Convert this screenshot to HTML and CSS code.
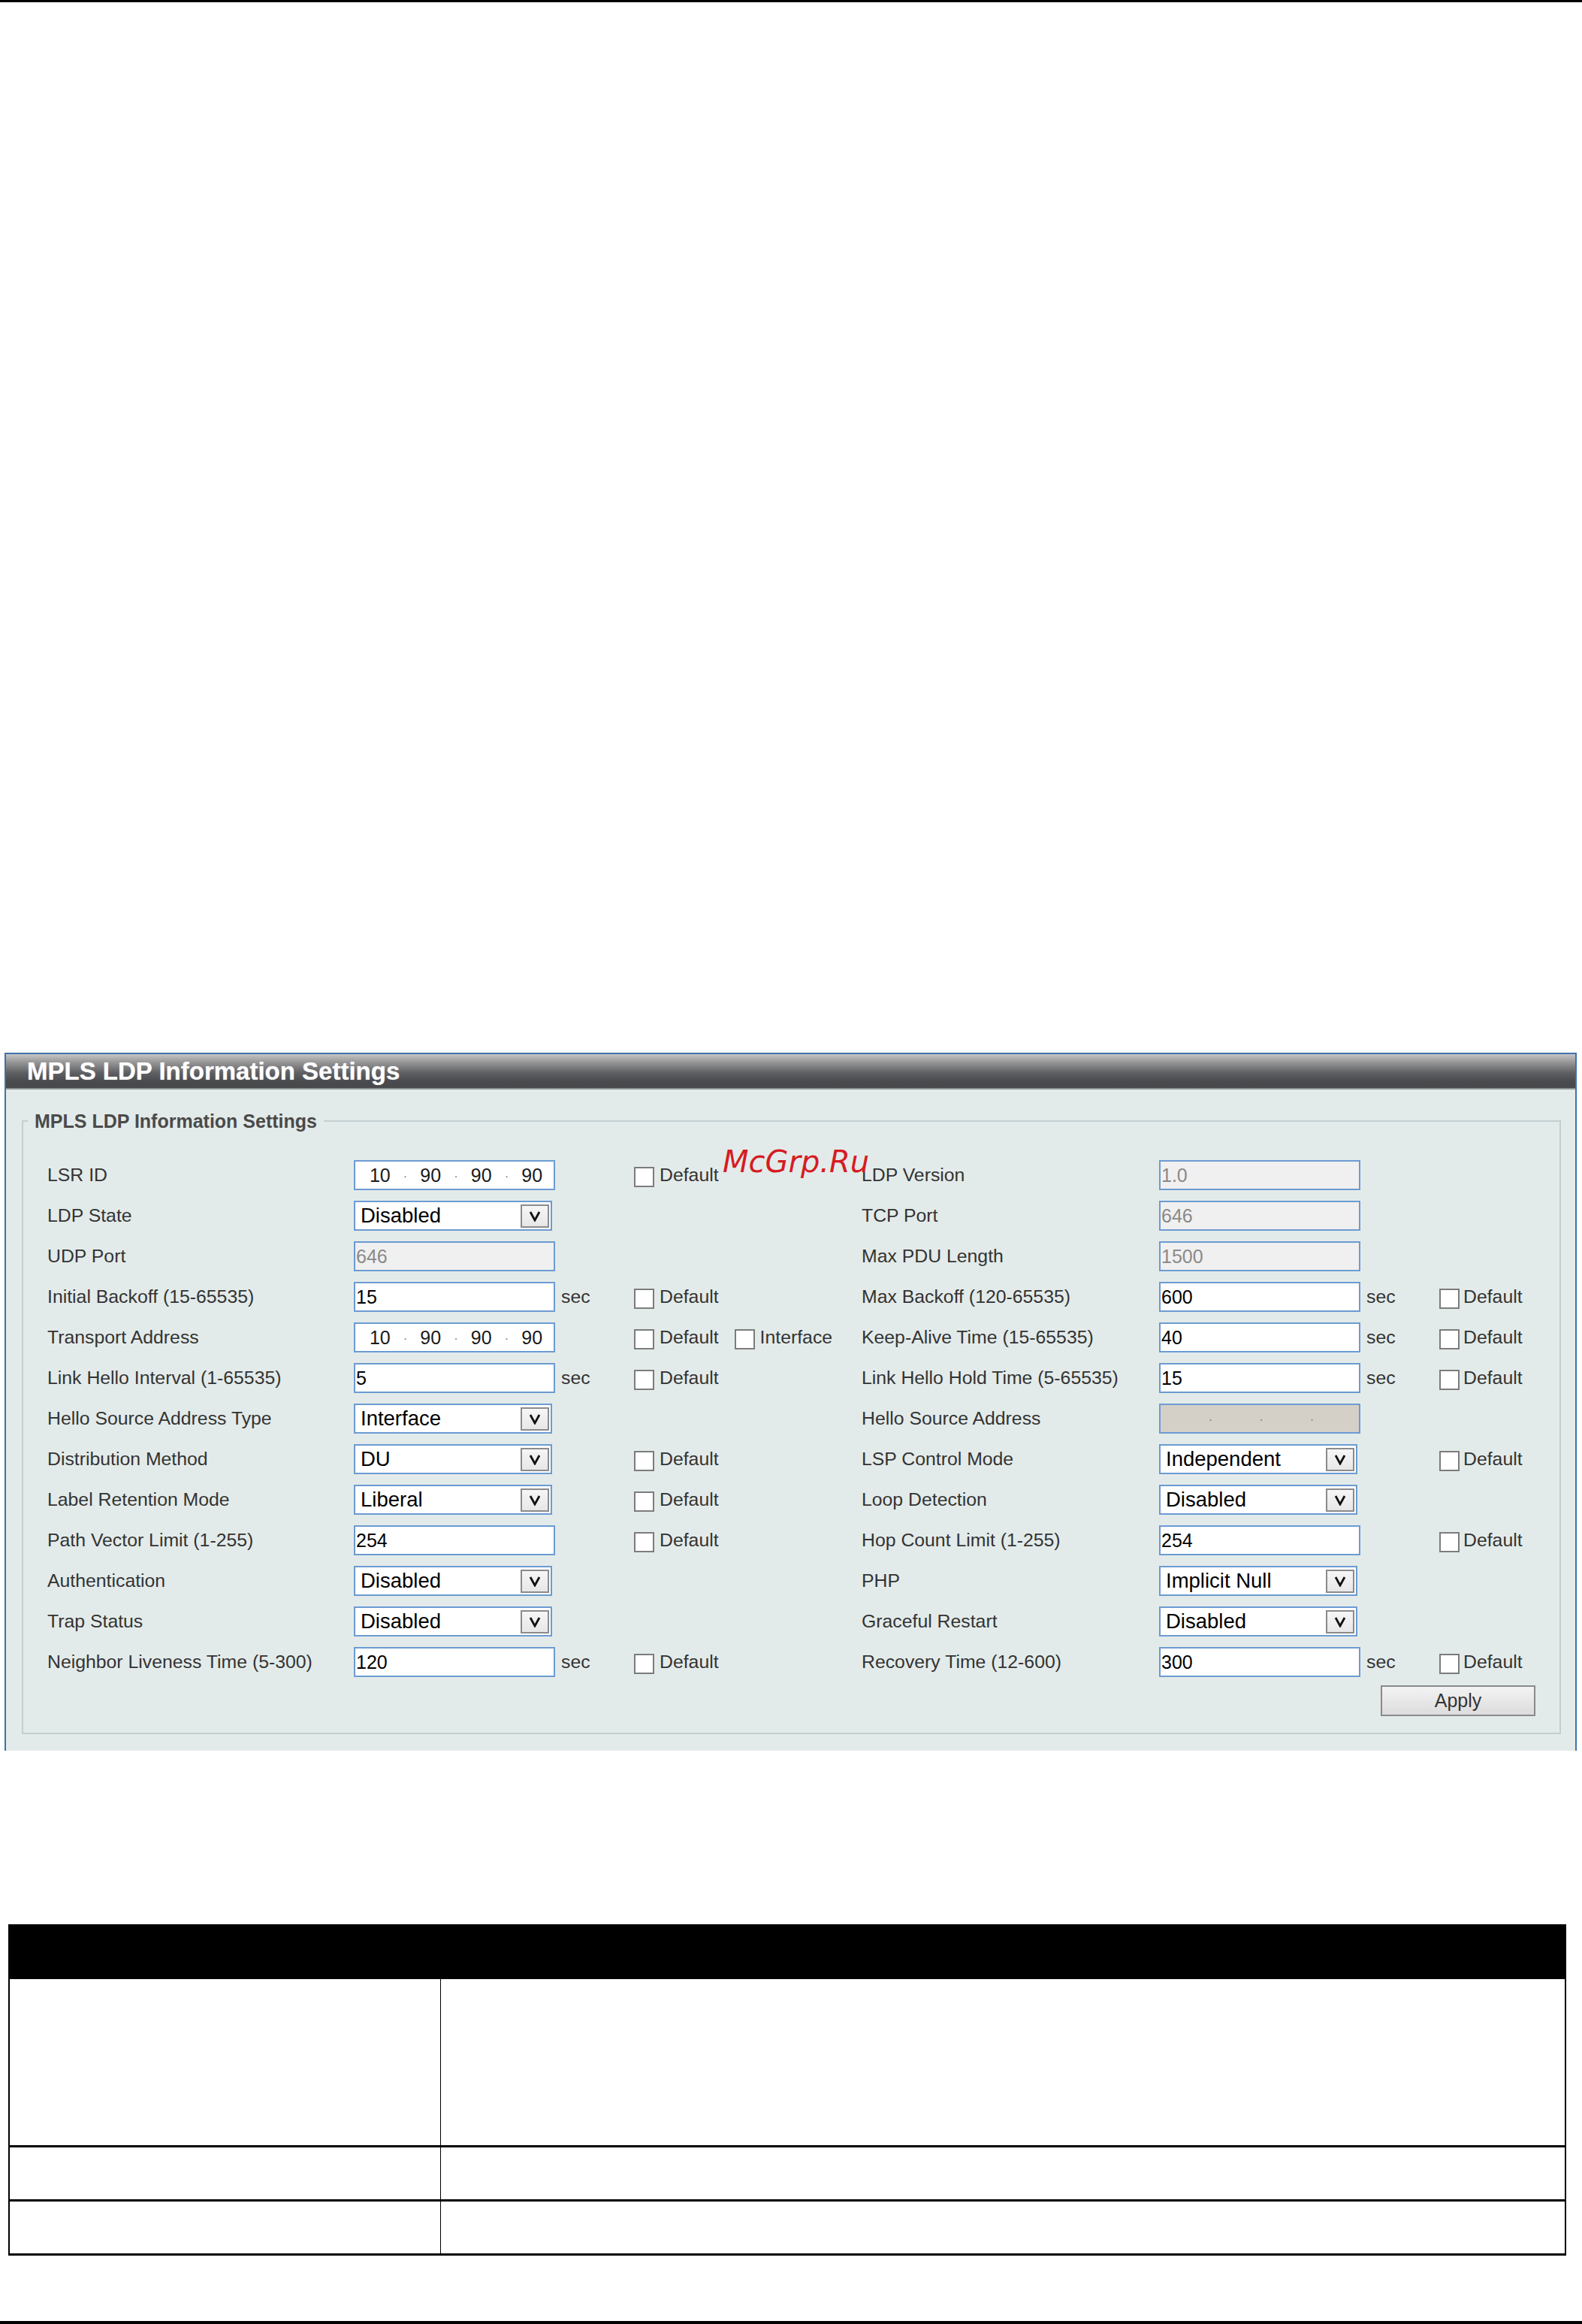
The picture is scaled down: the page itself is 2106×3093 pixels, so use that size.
FILE: index.html
```html
<!DOCTYPE html>
<html>
<head>
<meta charset="utf-8">
<title>MPLS LDP Information Settings</title>
<link rel="stylesheet" href="styles.css">
</head>
<body>
<div class="topline"></div>

<section class="panel">
  <div class="panel-title">MPLS LDP Information Settings</div>
  <div class="watermark">McGrp.Ru</div>
  <div class="panel-body">
    <fieldset class="fs">
      <legend class="fs-legend">MPLS LDP Information Settings</legend>
      <div class="grid">
        <div class="row">
          <span class="lbl">LSR ID</span>
          <div class="field ip"><span class="seg">10</span><span class="dot">.</span><span class="seg">90</span><span class="dot">.</span><span class="seg">90</span><span class="dot">.</span><span class="seg">90</span></div>
          <span></span>
          <div class="cb"><span class="box"></span><span class="cbt">Default</span></div>
          <span class="lbl">LDP Version</span>
          <div class="field dis">1.0</div>
          <span></span><span></span>
        </div>
        <div class="row">
          <span class="lbl">LDP State</span>
          <div class="field select"><span>Disabled</span><span class="arrow"><svg width="16" height="15" viewBox="0 0 16 15"><path d="M2 2 L8 13 L14 2" fill="none" stroke="#111" stroke-width="2.8"/></svg></span></div>
          <span></span><span></span>
          <span class="lbl">TCP Port</span>
          <div class="field dis">646</div>
          <span></span><span></span>
        </div>
        <div class="row">
          <span class="lbl">UDP Port</span>
          <div class="field dis">646</div>
          <span></span><span></span>
          <span class="lbl">Max PDU Length</span>
          <div class="field dis">1500</div>
          <span></span><span></span>
        </div>
        <div class="row">
          <span class="lbl">Initial Backoff (15-65535)</span>
          <div class="field">15</div>
          <span class="sec">sec</span>
          <div class="cb"><span class="box"></span><span class="cbt">Default</span></div>
          <span class="lbl">Max Backoff (120-65535)</span>
          <div class="field">600</div>
          <span class="sec">sec</span>
          <div class="cb cb-r"><span class="box"></span><span class="cbt">Default</span></div>
        </div>
        <div class="row">
          <span class="lbl">Transport Address</span>
          <div class="field ip"><span class="seg">10</span><span class="dot">.</span><span class="seg">90</span><span class="dot">.</span><span class="seg">90</span><span class="dot">.</span><span class="seg">90</span></div>
          <span></span>
          <div class="cb"><span class="box"></span><span class="cbt">Default</span><span class="box box-next"></span><span class="cbt">Interface</span></div>
          <span class="lbl">Keep-Alive Time (15-65535)</span>
          <div class="field">40</div>
          <span class="sec">sec</span>
          <div class="cb cb-r"><span class="box"></span><span class="cbt">Default</span></div>
        </div>
        <div class="row">
          <span class="lbl">Link Hello Interval (1-65535)</span>
          <div class="field">5</div>
          <span class="sec">sec</span>
          <div class="cb"><span class="box"></span><span class="cbt">Default</span></div>
          <span class="lbl">Link Hello Hold Time (5-65535)</span>
          <div class="field">15</div>
          <span class="sec">sec</span>
          <div class="cb cb-r"><span class="box"></span><span class="cbt">Default</span></div>
        </div>
        <div class="row">
          <span class="lbl">Hello Source Address Type</span>
          <div class="field select"><span>Interface</span><span class="arrow"><svg width="16" height="15" viewBox="0 0 16 15"><path d="M2 2 L8 13 L14 2" fill="none" stroke="#111" stroke-width="2.8"/></svg></span></div>
          <span></span><span></span>
          <span class="lbl">Hello Source Address</span>
          <div class="field ip ip-off"><span class="seg"></span><span class="dot">.</span><span class="seg"></span><span class="dot">.</span><span class="seg"></span><span class="dot">.</span><span class="seg"></span></div>
          <span></span><span></span>
        </div>
        <div class="row">
          <span class="lbl">Distribution Method</span>
          <div class="field select"><span>DU</span><span class="arrow"><svg width="16" height="15" viewBox="0 0 16 15"><path d="M2 2 L8 13 L14 2" fill="none" stroke="#111" stroke-width="2.8"/></svg></span></div>
          <span></span>
          <div class="cb"><span class="box"></span><span class="cbt">Default</span></div>
          <span class="lbl">LSP Control Mode</span>
          <div class="field select"><span>Independent</span><span class="arrow"><svg width="16" height="15" viewBox="0 0 16 15"><path d="M2 2 L8 13 L14 2" fill="none" stroke="#111" stroke-width="2.8"/></svg></span></div>
          <span></span>
          <div class="cb cb-r"><span class="box"></span><span class="cbt">Default</span></div>
        </div>
        <div class="row">
          <span class="lbl">Label Retention Mode</span>
          <div class="field select"><span>Liberal</span><span class="arrow"><svg width="16" height="15" viewBox="0 0 16 15"><path d="M2 2 L8 13 L14 2" fill="none" stroke="#111" stroke-width="2.8"/></svg></span></div>
          <span></span>
          <div class="cb"><span class="box"></span><span class="cbt">Default</span></div>
          <span class="lbl">Loop Detection</span>
          <div class="field select"><span>Disabled</span><span class="arrow"><svg width="16" height="15" viewBox="0 0 16 15"><path d="M2 2 L8 13 L14 2" fill="none" stroke="#111" stroke-width="2.8"/></svg></span></div>
          <span></span><span></span>
        </div>
        <div class="row">
          <span class="lbl">Path Vector Limit (1-255)</span>
          <div class="field">254</div>
          <span></span>
          <div class="cb"><span class="box"></span><span class="cbt">Default</span></div>
          <span class="lbl">Hop Count Limit (1-255)</span>
          <div class="field">254</div>
          <span></span>
          <div class="cb cb-r"><span class="box"></span><span class="cbt">Default</span></div>
        </div>
        <div class="row">
          <span class="lbl">Authentication</span>
          <div class="field select"><span>Disabled</span><span class="arrow"><svg width="16" height="15" viewBox="0 0 16 15"><path d="M2 2 L8 13 L14 2" fill="none" stroke="#111" stroke-width="2.8"/></svg></span></div>
          <span></span><span></span>
          <span class="lbl">PHP</span>
          <div class="field select"><span>Implicit Null</span><span class="arrow"><svg width="16" height="15" viewBox="0 0 16 15"><path d="M2 2 L8 13 L14 2" fill="none" stroke="#111" stroke-width="2.8"/></svg></span></div>
          <span></span><span></span>
        </div>
        <div class="row">
          <span class="lbl">Trap Status</span>
          <div class="field select"><span>Disabled</span><span class="arrow"><svg width="16" height="15" viewBox="0 0 16 15"><path d="M2 2 L8 13 L14 2" fill="none" stroke="#111" stroke-width="2.8"/></svg></span></div>
          <span></span><span></span>
          <span class="lbl">Graceful Restart</span>
          <div class="field select"><span>Disabled</span><span class="arrow"><svg width="16" height="15" viewBox="0 0 16 15"><path d="M2 2 L8 13 L14 2" fill="none" stroke="#111" stroke-width="2.8"/></svg></span></div>
          <span></span><span></span>
        </div>
        <div class="row">
          <span class="lbl">Neighbor Liveness Time (5-300)</span>
          <div class="field">120</div>
          <span class="sec">sec</span>
          <div class="cb"><span class="box"></span><span class="cbt">Default</span></div>
          <span class="lbl">Recovery Time (12-600)</span>
          <div class="field">300</div>
          <span class="sec">sec</span>
          <div class="cb cb-r"><span class="box"></span><span class="cbt">Default</span></div>
        </div>
      </div>
      <div class="actions"><button class="btn" type="button">Apply</button></div>
    </fieldset>
  </div>
</section>

<div class="desc">
  <div class="desc-head"></div>
  <div class="desc-row r-tall"><div class="c1"></div><div class="c2"></div></div>
  <div class="desc-row r-short"><div class="c1"></div><div class="c2"></div></div>
  <div class="desc-row r-short"><div class="c1"></div><div class="c2"></div></div>
</div>

<div class="bottomline"></div>
</body>
</html>
```

FILE: styles.css
```css
html, body {
  margin: 0;
  padding: 0;
  background: #ffffff;
}

body {
  font-family: "Liberation Sans", Arial, sans-serif;
  color: #333333;
}

.topline {
  height: 3px;
  background: #000000;
}

/* ---------- panel ---------- */
.panel {
  position: relative;
  margin: 1398px 0 0 6px;
  width: 2093px;
  box-sizing: border-box;
  border-top: 2px solid #3f72ab;
  border-left: 2px solid #3f72ab;
  border-right: 2px solid #3f72ab;
}

.panel-title {
  height: 45px;
  line-height: 45px;
  padding-left: 28px;
  border-bottom: 2px solid #8d9293;
  background: linear-gradient(#c6c6c6 0%, #9a9a9b 22%, #5f6063 55%, #4a4b4e 80%, #47484a 100%);
  color: #ffffff;
  font-size: 33px;
  font-weight: bold;
  white-space: nowrap;
  text-shadow: 0 0 1px rgba(255, 255, 255, 0.6);
}

.watermark {
  position: absolute;
  left: 954px;
  top: 123px;
  font-family: "DejaVu Sans", sans-serif;
  font-style: italic;
  font-size: 40px;
  line-height: 40px;
  color: #d51c23;
  white-space: nowrap;
  z-index: 2;
}

.panel-body {
  background: #e3ebea;
  padding: 29px 19px 22px 21px;
}

/* ---------- fieldset ---------- */
.fs {
  margin: 0;
  padding: 0 32px 22px 0;
  border: 2px solid #c2cfd1;
}

.fs-legend {
  margin-left: 6px;
  padding: 0 9px;
  font-size: 25px;
  line-height: 26px;
  font-weight: bold;
  color: #4a4a4a;
}

.grid {
  margin-top: 32px;
  padding-left: 32px;
}

.row {
  display: grid;
  grid-template-columns: 408px 276px 97px 303px 396px 276px 97px 1fr;
  height: 54px;
  align-items: center;
}

.lbl,
.sec,
.cbt {
  font-size: 24.8px;
  color: #333333;
  white-space: nowrap;
}

/* ---------- inputs ---------- */
.field {
  box-sizing: border-box;
  width: 268px;
  height: 40px;
  border: 2px solid #6c9bd2;
  background: #ffffff;
  color: #000000;
  font-size: 25px;
  padding-left: 1px;
  display: flex;
  align-items: center;
  white-space: nowrap;
}

.field.dis {
  background: #f0f0f0;
  color: #8a8a8a;
}

.ip {
  padding-left: 4px;
  color: #1a1a1a;
}

.ip .seg {
  width: 58px;
  text-align: center;
}

.ip .dot {
  width: 10px;
  text-align: center;
  font-size: 16px;
  color: #7a7a7a;
  margin-top: -4px;
}

.ip-off {
  background: #d4d0c8;
}

.select {
  width: 264px;
  padding-left: 7px;
  font-size: 27.5px;
  justify-content: space-between;
  align-items: center;
}

.select .arrow {
  box-sizing: border-box;
  width: 38px;
  height: 31px;
  margin: 1px 2px 0 0;
  border: 2px solid #8b8b8b;
  background: linear-gradient(#f6f6f6, #e7e7e7);
  display: flex;
  align-items: center;
  justify-content: center;
}

/* ---------- checkboxes ---------- */
.cb {
  display: flex;
  align-items: center;
  gap: 7px;
}

.cb-r {
  gap: 5px;
}

.box {
  box-sizing: border-box;
  width: 27px;
  height: 27px;
  margin-top: 5px;
  border: 2px solid #7c7c7c;
  background: #ffffff;
  flex: none;
}

.box-next {
  margin-left: 14px;
}

/* ---------- button ---------- */
.actions {
  display: flex;
  justify-content: flex-end;
  margin-top: 4px;
}

.btn {
  box-sizing: border-box;
  width: 206px;
  height: 41px;
  padding: 0;
  border: 2px solid #8a8a8a;
  background: linear-gradient(#f3f3f3, #dcdcdc);
  font-family: "Liberation Sans", Arial, sans-serif;
  font-size: 25px;
  color: #333333;
}

/* ---------- description table ---------- */
.desc {
  margin: 231px 0 0 11px;
  width: 2074px;
  box-sizing: border-box;
  border-left: 2px solid #000000;
  border-right: 2px solid #000000;
}

.desc-head {
  height: 73px;
  background: #000000;
}

.desc-row {
  display: grid;
  grid-template-columns: 574px 1fr;
  border-bottom: 3px solid #000000;
}

.desc-row .c1 {
  border-right: 1px solid #000000;
}

.r-tall {
  height: 221px;
}

.r-short {
  height: 69px;
}

.bottomline {
  margin-top: 87px;
  height: 4px;
  background: #000000;
}
```
